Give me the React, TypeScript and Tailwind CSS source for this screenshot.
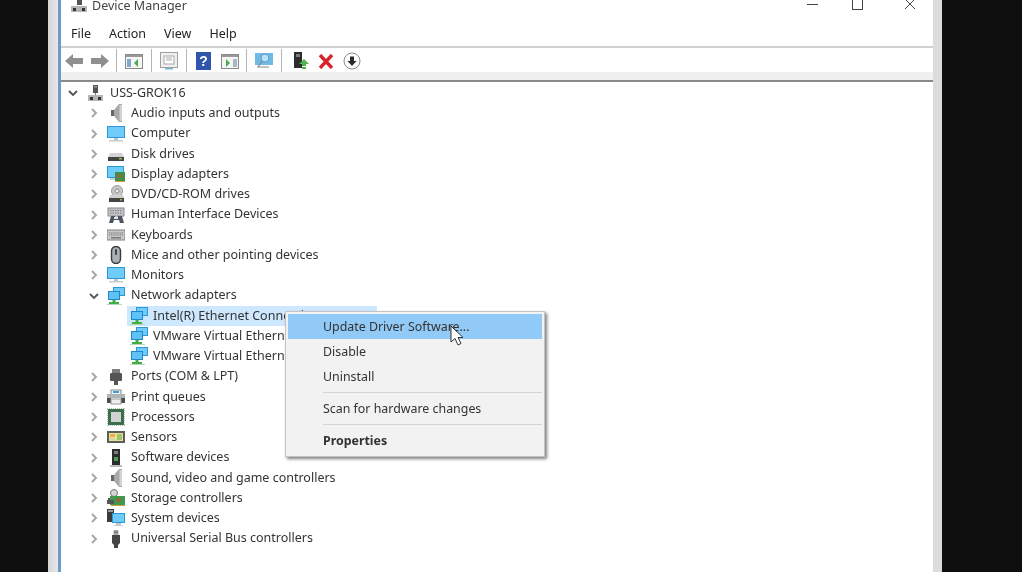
import type { ReactNode } from "react";

const Svg = ({ children, w = 18, h = 18 }: { children: ReactNode; w?: number; h?: number }) => (
  <svg width={w} height={h} viewBox={`0 0 ${w} ${h}`} className="shrink-0">
    {children}
  </svg>
);

const Chevron = ({ open }: { open?: boolean }) => (
  <svg width="10" height="10" viewBox="0 0 10 10" className="shrink-0">
    {open ? (
      <path d="M1 3 L5 7 L9 3" fill="none" stroke="#555" strokeWidth="1.8" />
    ) : (
      <path d="M3 1 L7 5 L3 9" fill="none" stroke="#a6a6a6" strokeWidth="1.9" />
    )}
  </svg>
);

const Computer = () => (
  <Svg>
    <rect x="7" y="1" width="5" height="8" fill="#555" />
    <rect x="8" y="2" width="3" height="1.5" fill="#999" />
    <rect x="9" y="9" width="1" height="3" fill="#777" />
    <rect x="2" y="11" width="15" height="6" fill="#b5b5b5" />
    <rect x="4" y="13" width="3" height="3" fill="#333" />
    <rect x="12" y="13" width="3" height="3" fill="#333" />
  </Svg>
);

const Speaker = () => (
  <Svg>
    <path d="M4 6 H7 V12 H4 Z" fill="#666" />
    <path d="M7 6 L12 0 H15 V18 H12 L7 12 Z" fill="#a8a8a8" />
    <rect x="12.5" y="1" width="2.5" height="16" fill="#d4d4d4" />
  </Svg>
);

const Monitor = () => (
  <Svg>
    <rect x="0" y="1" width="18" height="12" fill="#2f96d8" />
    <rect x="1" y="2" width="16" height="10" fill="#6fcbf8" />
    <rect x="7" y="13" width="4" height="2" fill="#b8c4cc" />
    <rect x="2" y="15" width="14" height="1.5" fill="#c6ced4" />
  </Svg>
);

const Disk = () => (
  <Svg>
    <path d="M3 8 H15 L17 12 H1 Z" fill="#d4d4d4" />
    <rect x="1" y="12" width="16" height="4" fill="#444" />
    <rect x="12" y="13" width="3" height="1.5" fill="#8cc63f" />
  </Svg>
);

const DisplayAdapter = () => (
  <Svg>
    <rect x="0" y="1" width="17" height="12" fill="#2f96d8" />
    <rect x="1" y="2" width="15" height="10" fill="#6fcbf8" />
    <rect x="3" y="13" width="10" height="2" fill="#c6ced4" />
    <rect x="8" y="7" width="10" height="9" fill="#3f8f4a" />
    <rect x="10" y="9" width="4" height="4" fill="#8a6d3b" />
    <rect x="8" y="16" width="10" height="1" fill="#c9a13a" />
  </Svg>
);

const Dvd = () => (
  <Svg>
    <circle cx="10" cy="6" r="5.5" fill="#c9c9c9" stroke="#9a9a9a" />
    <circle cx="10" cy="6" r="2" fill="#f2f2f2" stroke="#888" />
    <path d="M3 10 H16 L17 13 H2 Z" fill="#d0d0d0" />
    <rect x="2" y="13" width="15" height="4" fill="#444" />
    <rect x="13" y="14" width="2" height="1.5" fill="#8cc63f" />
  </Svg>
);

const Hid = () => (
  <Svg>
    <rect x="1" y="2" width="16" height="8" fill="#c5c5c5" stroke="#8a8a8a" />
    <path d="M3 4.5 H15 M3 7 H15" stroke="#6b7785" strokeWidth="1" strokeDasharray="1.5 1" />
    <path d="M2 17 L4 10 H8 L9 13 H10 L11 10 H15 L17 17 H13 L12 14 H7 L6 17 Z" fill="#4c5661" />
    <rect x="7" y="11" width="4" height="2" fill="#e8e8e8" />
  </Svg>
);

const Keyboard = () => (
  <Svg>
    <rect x="0" y="4" width="18" height="10" fill="#c9c9c9" stroke="#808080" />
    <path d="M2 7 H16 M2 9 H16" stroke="#777" strokeWidth="1" strokeDasharray="1.4 0.7" />
    <rect x="4" y="11" width="10" height="1.5" fill="#777" />
  </Svg>
);

const Mouse = () => (
  <Svg>
    <rect x="4.5" y="0.5" width="9" height="17" rx="4.5" fill="#aab0b6" stroke="#3a3a3a" strokeWidth="1.4" />
    <rect x="8" y="3" width="2" height="6" rx="1" fill="#444" />
  </Svg>
);

const Network = () => (
  <Svg>
    <rect x="6" y="0" width="12" height="9" fill="#2f96d8" />
    <rect x="7" y="1" width="10" height="7" fill="#6fcbf8" />
    <rect x="1" y="4" width="12" height="9" fill="#1f86cc" />
    <rect x="2" y="5" width="10" height="7" fill="#5fc2f4" />
    <rect x="5.5" y="13" width="3" height="2" fill="#3fae44" />
    <rect x="2" y="15" width="10" height="2" fill="#3fae44" />
    <rect x="0" y="17" width="15" height="1" fill="#b8d8b8" />
  </Svg>
);

const Ports = () => (
  <Svg>
    <rect x="5" y="1" width="8" height="4" fill="#999" />
    <path d="M6 1 V5 M8 1 V5 M10 1 V5 M12 1 V5" stroke="#555" strokeWidth="0.8" />
    <rect x="3" y="5" width="12" height="8" rx="1" fill="#555" />
    <rect x="7" y="13" width="4" height="4" fill="#555" />
  </Svg>
);

const Printer = () => (
  <Svg>
    <rect x="4" y="2" width="10" height="5" fill="#f4f4f4" stroke="#888" />
    <rect x="6" y="3" width="6" height="2" fill="#3ea0d8" />
    <rect x="0" y="6" width="18" height="4" fill="#aeb4ba" />
    <rect x="0" y="10" width="4" height="5" fill="#4c4c4c" />
    <rect x="14" y="10" width="4" height="5" fill="#4c4c4c" />
    <rect x="4" y="11" width="10" height="5" fill="#f0f0f0" stroke="#999" />
  </Svg>
);

const Processor = () => (
  <Svg>
    <rect x="1" y="1" width="16" height="16" fill="#3c6e4a" />
    <rect x="0" y="0" width="18" height="18" fill="none" stroke="#5f8a6c" strokeDasharray="1 1" />
    <rect x="4" y="4" width="10" height="10" fill="#d2d2d2" />
  </Svg>
);

const Sensors = () => (
  <Svg>
    <rect x="0" y="3" width="18" height="12" fill="#5a5f58" />
    <rect x="2" y="5" width="14" height="8" fill="#ecdca0" />
    <rect x="3" y="6" width="5" height="3" fill="#efb04a" />
    <rect x="10" y="6" width="5" height="6" fill="#9cc86a" />
    <rect x="3" y="10" width="5" height="2" fill="#d3d9a0" />
  </Svg>
);

const Software = () => (
  <Svg>
    <rect x="5" y="0" width="8" height="16" fill="#2d2d2d" />
    <rect x="7" y="2" width="4" height="3" fill="#7d7d7d" />
    <rect x="7" y="8" width="4" height="4" fill="#4e9c5a" />
    <rect x="3" y="16" width="12" height="2" fill="#bdbdbd" />
  </Svg>
);

const Storage = () => (
  <Svg>
    <circle cx="7" cy="4" r="3.5" fill="#d5d5d5" stroke="#777" />
    <path d="M1 9 H9 V11 H1 Z" fill="#555" />
    <rect x="3" y="7" width="15" height="9" fill="#3f9a50" />
    <rect x="9" y="9" width="5" height="4" fill="#846c3d" />
    <rect x="0" y="11" width="7" height="4" fill="#565656" />
    <rect x="4" y="16" width="14" height="1" fill="#c9a13a" />
  </Svg>
);

const SystemDevices = () => (
  <Svg>
    <rect x="0" y="0" width="7" height="13" fill="#3b3b3b" />
    <rect x="1" y="1" width="5" height="2" fill="#9a9a9a" />
    <rect x="5" y="4" width="13" height="10" fill="#2f96d8" />
    <rect x="6" y="5" width="11" height="8" fill="#6fcbf8" />
    <rect x="9" y="14" width="5" height="2" fill="#c0c8ce" />
    <rect x="7" y="16" width="9" height="1" fill="#c6ced4" />
  </Svg>
);

const Usb = () => (
  <Svg>
    <rect x="6.5" y="0" width="5" height="5" fill="#a9a9a9" />
    <rect x="7.5" y="1.5" width="1" height="1.5" fill="#444" />
    <rect x="9.5" y="1.5" width="1" height="1.5" fill="#444" />
    <path d="M5 5 H13 V13 L11 15 V18 H7 V15 L5 13 Z" fill="#454545" />
  </Svg>
);

const categories: { label: string; icon: ReactNode }[] = [
  { label: "Audio inputs and outputs", icon: <Speaker /> },
  { label: "Computer", icon: <Monitor /> },
  { label: "Disk drives", icon: <Disk /> },
  { label: "Display adapters", icon: <DisplayAdapter /> },
  { label: "DVD/CD-ROM drives", icon: <Dvd /> },
  { label: "Human Interface Devices", icon: <Hid /> },
  { label: "Keyboards", icon: <Keyboard /> },
  { label: "Mice and other pointing devices", icon: <Mouse /> },
  { label: "Monitors", icon: <Monitor /> },
];

const categoriesAfter: { label: string; icon: ReactNode }[] = [
  { label: "Ports (COM & LPT)", icon: <Ports /> },
  { label: "Print queues", icon: <Printer /> },
  { label: "Processors", icon: <Processor /> },
  { label: "Sensors", icon: <Sensors /> },
  { label: "Software devices", icon: <Software /> },
  { label: "Sound, video and game controllers", icon: <Speaker /> },
  { label: "Storage controllers", icon: <Storage /> },
  { label: "System devices", icon: <SystemDevices /> },
  { label: "Universal Serial Bus controllers", icon: <Usb /> },
];

function CategoryRow({ label, icon, open }: { label: string; icon: ReactNode; open?: boolean }) {
  return (
    <div className="flex h-[20.25px] items-center pl-[28px]">
      <Chevron open={open} />
      <span className="ml-[8px] mr-[6px] flex w-[18px]">{icon}</span>
      <span>{label}</span>
    </div>
  );
}

function AdapterRow({ label, selected }: { label: string; selected?: boolean }) {
  return (
    <div className="flex h-[20.25px] items-center pl-[66px]">
      <div className={`flex h-full items-center pl-[3px] pr-[7px] ${selected ? "bg-[#cde8ff]" : ""}`}>
        <Network />
        <span className="ml-[5px]">{label}</span>
      </div>
    </div>
  );
}

const Sep = () => <div className="mx-[7px] h-[24px] w-px bg-[#b5b5b5]" />;

function MenuItem({ label, bold, active }: { label: string; bold?: boolean; active?: boolean }) {
  return (
    <div
      className={`flex h-[25px] items-center pl-[35px] pt-[1px] ${active ? "bg-[#91c9f7]" : ""} ${bold ? "font-bold" : ""}`}
    >
      {label}
    </div>
  );
}

const MenuSep = () => <div className="my-[3px] ml-[35px] h-px bg-[#d4d4d4]" />;

export default function App() {
  return (
    <div className="flex h-[572px] w-[1022px] overflow-hidden bg-[#0f0f0f] font-['Noto_Sans',sans-serif] text-[12.5px] text-[#222] blur-[0.4px]">
      <div className="w-[48px] shrink-0" />
      <div className="w-[10px] shrink-0 bg-gradient-to-r from-[#d4d4d4] to-[#e8e8e8]" />
      <div className="flex min-w-0 flex-1 flex-col border-l-[3px] border-[#6c9bc8] bg-white">
        {/* title bar, cut off at the top of the shot */}
        <div className="flex h-[23px] items-start">
          <div className="flex h-[12px] items-center pl-[9px]">
            <svg width="18" height="18" viewBox="0 0 18 18" className="shrink-0">
              <rect x="7" y="0" width="5" height="8" fill="#555" />
              <rect x="1" y="9" width="16" height="6" fill="#b5b5b5" />
              <rect x="3" y="11" width="3" height="3" fill="#333" />
              <rect x="12" y="11" width="3" height="3" fill="#333" />
            </svg>
            <span className="ml-[4px] text-[#444]">Device Manager</span>
          </div>
          <div className="ml-auto flex h-[10px] items-end">
            <div className="mb-[5px] h-px w-[11px] bg-[#444]" />
            <div className="ml-[34px] h-[10px] w-[11px] border border-t-0 border-[#444]" />
            <svg width="11" height="10" viewBox="0 0 11 10" className="ml-[41px] mr-[18px]">
              <path d="M1 -1 L11 9 M11 -1 L1 9" stroke="#444" strokeWidth="1" fill="none" />
            </svg>
          </div>
        </div>

        {/* menu bar */}
        <div className="flex h-[25px] items-center gap-[18px] border-b-2 border-[#d0d0d0] pl-[10px]">
          <span>File</span>
          <span>Action</span>
          <span>View</span>
          <span>Help</span>
        </div>

        {/* toolbar */}
        <div className="flex h-[24px] items-center pl-[4px] pt-[2px]">
          <svg width="18" height="16" viewBox="0 0 18 16" className="mr-[8px]">
            <path d="M0 8 L8 1 V5 H18 V11 H8 V15 Z" fill="#8f8f8f" />
          </svg>
          <svg width="18" height="16" viewBox="0 0 18 16">
            <path d="M18 8 L10 1 V5 H0 V11 H10 V15 Z" fill="#8f8f8f" />
          </svg>
          <Sep />
          <svg width="18" height="15" viewBox="0 0 18 15" className="mx-[1px]">
            <rect x="0.5" y="0.5" width="17" height="14" fill="#f5f5f5" stroke="#8a8a8a" />
            <rect x="1" y="1" width="16" height="2" fill="#9a9a9a" />
            <rect x="2" y="5" width="4" height="8" fill="#7fa9c9" />
            <path d="M13 5 L9 9 L13 13 Z" fill="#4aa84f" />
          </svg>
          <Sep />
          <svg width="18" height="18" viewBox="0 0 18 18" className="mx-[1px]">
            <rect x="0.5" y="0.5" width="17" height="15" fill="#f0f0f0" stroke="#a0a0a0" />
            <rect x="4" y="4" width="10" height="8" fill="#fff" stroke="#a8a8a8" />
            <path d="M6 6 H12 M6 8 H12" stroke="#aaa" />
            <rect x="5" y="16" width="8" height="1.5" fill="#6fb8d8" />
          </svg>
          <Sep />
          <svg width="15" height="18" viewBox="0 0 15 18" className="ml-[2px] mr-[10px]">
            <rect width="15" height="18" fill="#2f55ad" />
            <text x="7.5" y="14" textAnchor="middle" fontSize="14" fontWeight="700" fill="#fff" fontFamily="Liberation Sans">
              ?
            </text>
          </svg>
          <svg width="18" height="15" viewBox="0 0 18 15">
            <rect x="0.5" y="0.5" width="17" height="14" fill="#f5f5f5" stroke="#8a8a8a" />
            <rect x="1" y="1" width="16" height="2" fill="#9a9a9a" />
            <path d="M5 5 L9 9 L5 13 Z" fill="#4aa84f" />
            <rect x="12" y="5" width="4" height="8" fill="#a8b8c4" />
          </svg>
          <Sep />
          <svg width="18" height="17" viewBox="0 0 18 17" className="mx-[1px]">
            <rect x="0" y="0" width="18" height="12" fill="#6fb9e4" />
            <circle cx="10" cy="5" r="4" fill="#b9e2f8" stroke="#5a9cc4" />
            <path d="M7 8 L3 14 H14" stroke="#888" strokeWidth="1.2" fill="none" />
          </svg>
          <Sep />
          <svg width="16" height="18" viewBox="0 0 16 18" className="ml-[4px]">
            <rect x="1" y="0" width="8" height="16" fill="#2d2d2d" />
            <rect x="3" y="2" width="4" height="3" fill="#7d7d7d" />
            <path d="M11 7 L16 12 H13 V14 H9 V12 H6 Z" fill="#4fb34f" />
            <rect x="9" y="15" width="4" height="2" fill="#4fb34f" />
          </svg>
          <svg width="16" height="15" viewBox="0 0 16 15" className="ml-[9px]">
            <path d="M2 1 L14 14 M14 1 L2 14" stroke="#d8232a" strokeWidth="3.4" fill="none" />
          </svg>
          <svg width="18" height="18" viewBox="0 0 18 18" className="ml-[9px]">
            <circle cx="9" cy="9" r="8" fill="#fff" stroke="#8a8a8a" />
            <path d="M9 14 L4.5 9 H7 V4.5 H11 V9 H13.5 Z" fill="#2a2a2a" />
          </svg>
        </div>

        <div className="h-[8px] bg-[#f0f0f0]" />
        <div className="h-[2px] bg-[#8a8a8a]" />

        {/* device tree */}
        <div className="relative flex-1 pt-[1px] text-[#333]">
          <div className="flex h-[20.25px] items-center pl-[7px]">
            <Chevron open />
            <span className="ml-[8px] mr-[6px] flex w-[18px]">
              <Computer />
            </span>
            <span>USS-GROK16</span>
          </div>
          {categories.map((c) => (
            <CategoryRow key={c.label} label={c.label} icon={c.icon} />
          ))}
          <CategoryRow label="Network adapters" icon={<Network />} open />
          <AdapterRow label="Intel(R) Ethernet Connection I217-LM" selected />
          <AdapterRow label="VMware Virtual Ethernet Adapter for VMnet1" />
          <AdapterRow label="VMware Virtual Ethernet Adapter for VMnet8" />
          {categoriesAfter.map((c) => (
            <CategoryRow key={c.label} label={c.label} icon={c.icon} />
          ))}

          {/* context menu */}
          <div className="absolute left-[224px] top-[229px] w-[260px] border border-[#c4c4c4] bg-[#f2f2f2] p-[2px] pb-[3px] text-[12.4px] shadow-[2px_2px_3px_rgba(0,0,0,0.5)]">
            <MenuItem label="Update Driver Software..." active />
            <MenuItem label="Disable" />
            <MenuItem label="Uninstall" />
            <MenuSep />
            <MenuItem label="Scan for hardware changes" />
            <MenuSep />
            <MenuItem label="Properties" bold />
          </div>

          {/* mouse pointer */}
          <svg width="15" height="22" viewBox="0 0 15 22" className="absolute left-[389px] top-[243px]">
            <path d="M1 1 V17 L5 13.5 L8 20 L11 18.5 L8 12.5 H13 Z" fill="#fff" stroke="#333" strokeWidth="1" />
          </svg>
        </div>
      </div>
      <div className="w-[9px] shrink-0 bg-[#dcdcdc]" />
      <div className="w-[80px] shrink-0" />
    </div>
  );
}
